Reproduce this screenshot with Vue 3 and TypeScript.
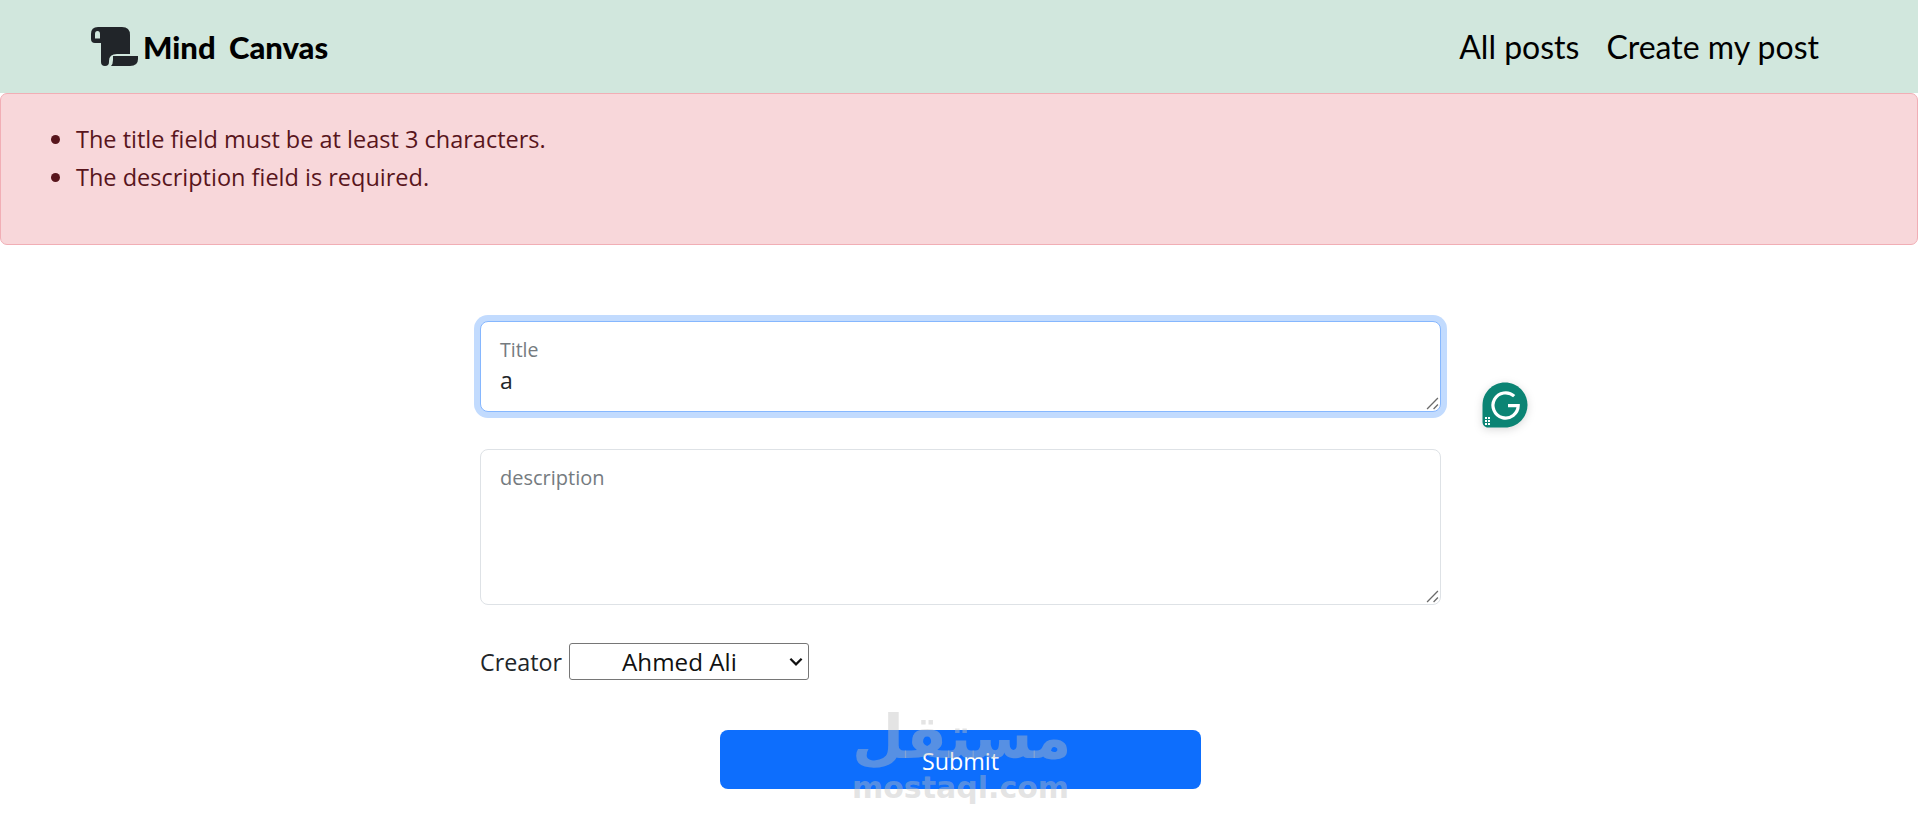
<script setup lang="ts">
const errors: string[] = [
  'The title field must be at least 3 characters.',
  'The description field is required.',
]
</script>

<template>
  <div class="page">
    <nav class="navbar">
      <a class="brand">
        <svg class="scroll" viewBox="0 0 47 39" aria-hidden="true">
          <path fill-rule="evenodd" fill="#212529" d="M7 0H31Q39 0 39 8V27H26Q18 27 18 34V35Q18 39 14 39Q10 39 10 35V16H4Q0 16 0 12V7Q0 0 7 0ZM6.5 4Q4 4 4 7V11.5H9V7Q9 4 6.5 4Z" />
          <path fill="#212529" d="M22 29H47V32Q47 39 39 39H20Q22 37 22 33Z" />
        </svg>
        <span>Mind Canvas</span>
      </a>
      <div class="links">
        <a>All posts</a>
        <a>Create my post</a>
      </div>
    </nav>

    <div class="alert">
      <ul>
        <li v-for="e in errors" :key="e">{{ e }}</li>
      </ul>
    </div>

    <form class="form" @submit.prevent>
      <div class="field-wrap">
        <div class="floating focused">
          <label>Title</label>
          <div class="value">a</div>
          <svg class="grip" viewBox="0 0 12 12"><path d="M1 11L11 1M7 11L11 7" stroke="#6b6b6b" stroke-width="1.2" /></svg>
        </div>
        <div class="grammarly">
          <svg viewBox="0 0 46 46" width="46" height="46">
            <path d="M23 0.5C35.4 0.5 45.5 10.6 45.5 23S35.4 45.5 23 45.5H6C3 45.5 0.5 43 0.5 40V23C0.5 10.6 10.6 0.5 23 0.5z" fill="#0b8474" />
            <path d="M32.2 14.2A12.6 12.6 0 1 0 36.2 23.6H26" fill="none" stroke="#fff" stroke-width="3.2" />
            <g fill="#fff"><rect x="3" y="35" width="2" height="2"/><rect x="6" y="35" width="2" height="2"/><rect x="3" y="38" width="2" height="2"/><rect x="6" y="38" width="2" height="2"/><rect x="3" y="41" width="2" height="2"/><rect x="6" y="41" width="2" height="2"/></g>
          </svg>
        </div>
      </div>

      <div class="floating plain">
        <label>description</label>
        <svg class="grip" viewBox="0 0 12 12"><path d="M1 11L11 1M7 11L11 7" stroke="#6b6b6b" stroke-width="1.2" /></svg>
      </div>

      <div class="creator">
        <span>Creator</span>
        <div class="select">
          <span>Ahmed Ali</span>
          <svg viewBox="0 0 12 8" width="14" height="9"><path d="M1 1.5L6 6.5L11 1.5" fill="none" stroke="#111" stroke-width="2" /></svg>
        </div>
      </div>

      <button type="submit" class="submit">Submit</button>
    </form>

    <div class="watermark">
      <div class="wm-ar">مستقل</div>
      <div class="wm-en">mostaql.com</div>
    </div>
  </div>
</template>

<style>
html, body { margin: 0; background: #fff; }
</style>

<style scoped>
.page {
  position: relative;
  height: 819px;
  overflow: hidden;
  font-family: "Open Sans", "Noto Sans", sans-serif;
  color: #212529;
}
.navbar {
  height: 93px;
  box-sizing: border-box;
  background: #d1e7dd;
  display: flex;
  align-items: center;
  justify-content: space-between;
  padding: 0 99px 0 91px;
  font-family: "Lato", sans-serif;
  color: #000;
}
.brand {
  display: flex;
  align-items: center;
  gap: 5px;
  font-size: 31px;
  font-weight: 900;
  word-spacing: 6px;
}
.scroll { width: 47px; height: 39px; }
.links {
  display: flex;
  gap: 27px;
  font-size: 32px;
}
.alert {
  height: 152px;
  box-sizing: border-box;
  background: #f8d7da;
  border: 1px solid #f1aeb5;
  border-radius: 7px;
  color: #58151c;
  font-size: 23.5px;
  padding: 26px 0 0 0;
}
.alert ul {
  margin: 0;
  padding-left: 75px;
  list-style: none;
}
.alert li {
  position: relative;
  line-height: 38px;
}
.alert li::before {
  content: "";
  position: absolute;
  left: -25px;
  top: 15px;
  width: 9px;
  height: 9px;
  border-radius: 50%;
  background: #58151c;
}
.form {
  width: 961px;
  margin: 76px 0 0 480px;
  display: flex;
  flex-direction: column;
}
.field-wrap { position: relative; }
.floating {
  position: relative;
  box-sizing: border-box;
  border: 1px solid #dee2e6;
  border-radius: 8px;
  background: #fff;
  padding: 16px 19px 0;
}
.floating label {
  display: block;
  font-size: 19.5px;
  line-height: 24px;
  color: #757b80;
}
.focused {
  height: 91px;
  border-color: #86b7fe;
  box-shadow: 0 0 0 6px #c2dbfe;
}
.value {
  font-size: 23px;
  line-height: 36px;
  color: #212529;
}
.plain {
  height: 156px;
  margin-top: 37px;
}
.plain label { font-size: 20px; }
.grip {
  position: absolute;
  right: 1px;
  bottom: 1px;
  width: 13px;
  height: 13px;
}
.grammarly {
  position: absolute;
  left: 1002px;
  top: 61px;
  width: 46px;
  height: 46px;
  filter: drop-shadow(0 2px 4px rgba(0, 0, 0, 0.15));
}
.creator {
  display: flex;
  align-items: center;
  gap: 7px;
  margin-top: 38px;
  font-size: 23.3px;
}
.select {
  box-sizing: border-box;
  width: 240px;
  height: 37px;
  border: 1px solid #767676;
  border-radius: 3px;
  display: flex;
  align-items: center;
  justify-content: space-between;
  padding: 0 5px 0 52px;
  color: #111;
  font-size: 24.2px;
}
.submit {
  align-self: center;
  width: 481px;
  height: 59px;
  margin-top: 50px;
  padding: 2px 0 0;
  border: 0;
  border-radius: 8px;
  background: #0d6efd;
  color: #fff;
  font-family: inherit;
  font-size: 23.3px;
}
.watermark {
  position: absolute;
  left: 852px;
  top: 702px;
  width: 214px;
  text-align: center;
  color: rgba(190, 190, 190, 0.42);
  font-family: "DejaVu Sans", sans-serif;
  font-weight: 700;
  pointer-events: none;
}
.wm-ar { font-size: 60px; line-height: 70px; }
.wm-en { font-size: 30px; line-height: 32px; }
</style>
